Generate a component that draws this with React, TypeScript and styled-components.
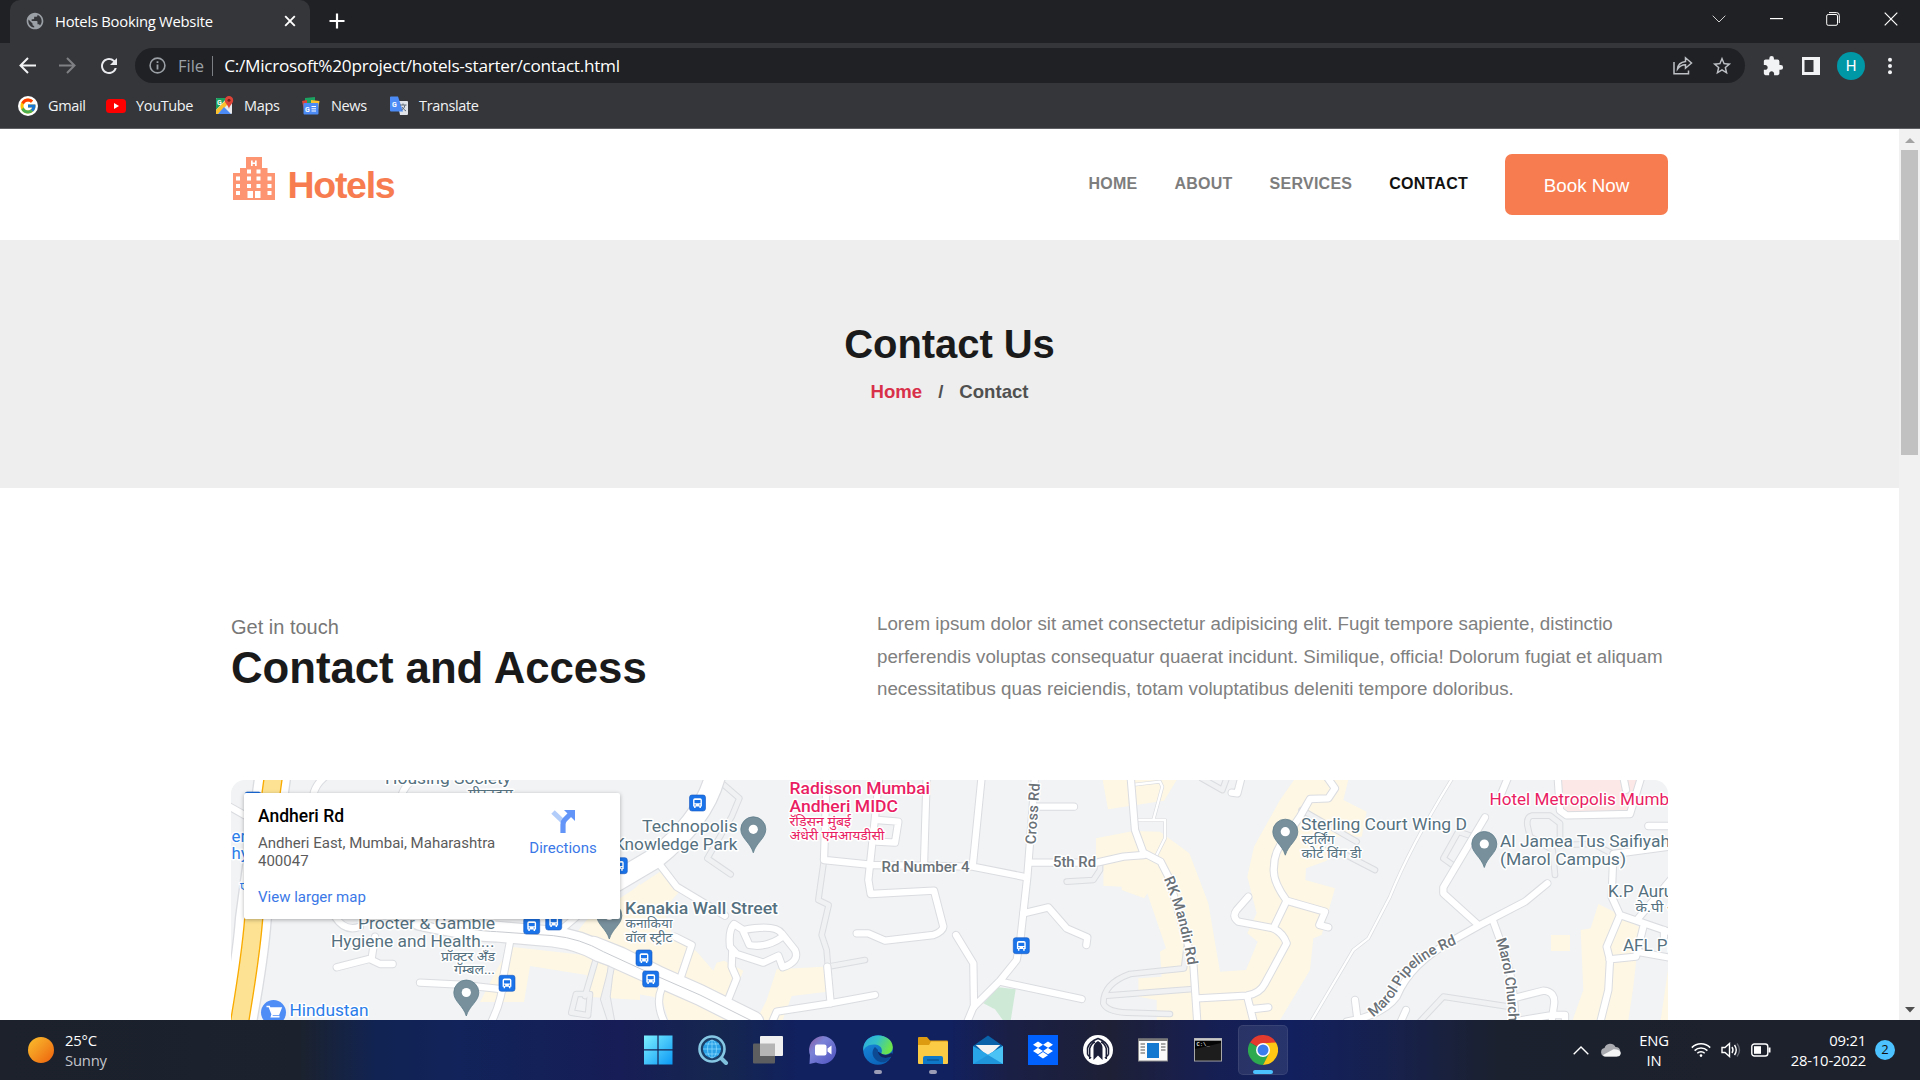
import React from 'react';
import styled, { createGlobalStyle } from 'styled-components';
import { FcGoogle } from 'react-icons/fc';
import { FaDropbox } from 'react-icons/fa';
import { MdExtension, MdStarBorder, MdRefresh, MdPublic } from 'react-icons/md';

const UI = '"Open Sans", "Noto Sans", sans-serif';
const BODY = '"Liberation Sans", Arial, sans-serif';
const MAP = 'Roboto, "Noto Sans", sans-serif';

const Global = createGlobalStyle`
  *, *::before, *::after { box-sizing: border-box; }
  html, body { margin: 0; padding: 0; overflow: hidden; background: #fff; }
  a { color: inherit; text-decoration: none; }
  svg { display: block; flex: none; }
`;

const Screen = styled.div`
  width: 1920px;
  height: 1080px;
  display: flex;
  flex-direction: column;
  overflow: hidden;
  font-family: ${UI};
`;

/* ---------- browser chrome ---------- */

const TabStrip = styled.div`
  height: 43px;
  flex: none;
  display: flex;
  padding-left: 10px;
  background: #202124;
`;

const Tab = styled.div`
  width: 300px;
  height: 43px;
  display: flex;
  align-items: center;
  padding: 0 13px 2px 15px;
  border-radius: 10px 10px 0 0;
  background: #35363a;
  color: #fff;
`;

const TabTitle = styled.span`
  flex: 1;
  margin-left: 10px;
  font-size: 14.8px;
  letter-spacing: -0.25px;
  white-space: nowrap;
`;

const NewTab = styled.div`
  padding: 13px 0 0 19px;
  flex: 1;
`;

const WindowButtons = styled.div`
  display: flex;
  align-items: center;
  padding: 0 22px 6px 0;
`;

const WinSlot = styled.div<{ $w: number }>`
  width: ${p => p.$w}px;
  display: flex;
  justify-content: flex-end;
`;

const Toolbar = styled.div`
  height: 45px;
  flex: none;
  display: flex;
  align-items: center;
  background: #35363a;
  padding: 0 0 0 19px;
  color: #e8eaed;
`;

const NavIcons = styled.div`
  width: 116px;
  display: flex;
  align-items: center;
  gap: 21px;
`;

const Omnibox = styled.div`
  width: 1610px;
  height: 35px;
  border-radius: 18px;
  background: #202124;
  display: flex;
  align-items: center;
  padding: 0 12px 0 14px;
`;

const Scheme = styled.span`
  margin-left: 12px;
  padding-right: 8px;
  border-right: 1.5px solid #7c8084;
  line-height: 20px;
  font-size: 16.5px;
  color: #9aa0a6;
`;

const Url = styled.span`
  flex: 1;
  margin-left: 11px;
  font-size: 17.2px;
  letter-spacing: -0.27px;
  color: #fff;
`;

const OmniActions = styled.div`
  display: flex;
  align-items: center;
  gap: 18px;
  color: #bdc1c6;
`;

const ToolActions = styled.div`
  display: flex;
  align-items: center;
  margin-left: 17px;
`;

const SidePanelIcon = styled.span`
  margin: 0 21px 0 18px;
`;

const Avatar = styled.div`
  width: 28px;
  height: 28px;
  margin: 0 22px 0 -4px;
  border-radius: 50%;
  background: #0097a7;
  color: #fff;
  font: 15px/28px Roboto, sans-serif;
  text-align: center;
`;

const Bookmarks = styled.div`
  height: 41px;
  flex: none;
  display: flex;
  align-items: center;
  padding: 0 0 5px 18px;
  background: #35363a;
  border-bottom: 1px solid #5f6063;
`;

const Bookmark = styled.a<{ $w: number }>`
  width: ${p => p.$w}px;
  display: flex;
  align-items: center;
  gap: 10px;
  font-size: 14.5px;
  letter-spacing: -0.35px;
  color: #f1f3f4;
`;

const GoogleBadge = styled.span`
  width: 20px;
  height: 20px;
  border-radius: 50%;
  background: #fff;
  display: grid;
  place-items: center;
`;

/* ---------- page ---------- */

const Viewport = styled.div`
  height: 891px;
  flex: none;
  display: flex;
`;

const Page = styled.div`
  width: 1899px;
  overflow: hidden;
  background: #fff;
  font-family: ${BODY};
`;

const ScrollTrack = styled.div`
  width: 21px;
  background: #f1f1f1;
  display: flex;
  flex-direction: column;
  align-items: center;
  justify-content: space-between;
  padding: 9px 0 7px;
`;

const ScrollThumb = styled.div`
  width: 17px;
  height: 305px;
  margin: 6px 0 auto;
  background: #c1c1c1;
`;

const Header = styled.header`
  height: 111px;
  display: flex;
  align-items: center;
  padding: 0 231px;
`;

const Brand = styled.a`
  display: flex;
  align-items: center;
  flex: 1;
  color: #f77d50;
  & > svg { margin-bottom: 13px; }
`;

const BrandName = styled.span`
  margin: 1px 0 0 12.5px;
  font-size: 37.5px;
  font-weight: 700;
  letter-spacing: -1.3px;
`;

const Menu = styled.nav`
  display: flex;
  gap: 37px;
  margin: 0 37px 2px 0;
`;

const MenuLink = styled.a<{ $active?: boolean }>`
  font-size: 16px;
  font-weight: 700;
  letter-spacing: 0.25px;
  color: ${p => (p.$active ? '#111' : '#7d7d7d')};
`;

const BookButton = styled.button`
  width: 163px;
  height: 61px;
  border: 0;
  border-radius: 7px;
  background: #f77d50;
  color: #fff;
  font: 18.75px ${BODY};
  padding: 2px 0 0;
`;

const Hero = styled.section`
  height: 248px;
  display: flex;
  flex-direction: column;
  align-items: center;
  background: #eee;
  padding-top: 80px;
`;

const HeroTitle = styled.h1`
  margin: 0;
  font-size: 40px;
  line-height: 48px;
  letter-spacing: -0.05px;
  color: #1a1a1a;
`;

const Crumbs = styled.div`
  display: flex;
  gap: 16px;
  margin-top: 13px;
  font-size: 18.6px;
  line-height: 22px;
  font-weight: 700;
`;

const Crumb = styled.span<{ $link?: boolean }>`
  color: ${p => (p.$link ? '#d9304a' : '#505050')};
`;

const Intro = styled.section`
  height: 292px;
  display: flex;
  padding: 0 231px;
`;

const IntroHead = styled.div`
  width: 646px;
  padding-top: 126px;
`;

const Kicker = styled.div`
  font-size: 20px;
  line-height: 26px;
  color: #777;
`;

const IntroTitle = styled.h2`
  margin: 2px 0 0;
  font-size: 43.75px;
  line-height: 52px;
  letter-spacing: -0.05px;
  color: #1a1a1a;
`;

const IntroText = styled.p`
  margin: 120px 0 0;
  font-size: 18.75px;
  line-height: 32.6px;
  color: #808080;
  white-space: nowrap;
`;

const MapFrame = styled.div`
  position: relative;
  width: 1437px;
  height: 240px;
  margin-left: 231px;
  border-radius: 14px 14px 0 0;
  overflow: hidden;
`;

const PlaceCard = styled.div`
  position: absolute;
  left: 13px;
  top: 13px;
  width: 376px;
  height: 126px;
  display: flex;
  padding: 13px 23px 0 14px;
  border-radius: 2px;
  background: #fff;
  box-shadow: 0 1px 4px rgba(0, 0, 0, 0.3);
  font-family: ${MAP};
`;

const PlaceInfo = styled.div`
  flex: 1;
`;

const PlaceName = styled.div`
  font-size: 17.5px;
  font-weight: 500;
  line-height: 20px;
  color: #000;
`;

const PlaceAddress = styled.div`
  width: 250px;
  margin-top: 8px;
  font-size: 15px;
  line-height: 18px;
  color: #5b5b5b;
`;

const MapLink = styled.a`
  display: block;
  font-size: 15px;
  line-height: 18px;
  margin-top: 18px;
  color: #3b78e7;
`;

const Directions = styled.div`
  width: 68px;
  display: flex;
  flex-direction: column;
  align-items: center;
  padding-top: 3px;
  font-size: 15px;
  line-height: 18px;
  color: #3b78e7;
  & > span { margin-top: 6px; }
`;

/* ---------- taskbar ---------- */

const Taskbar = styled.div`
  height: 60px;
  flex: none;
  display: flex;
  align-items: center;
  color: #fff;
  background: linear-gradient(90deg, #1c212b 0, #1b222e 300px, #112352 375px, #11235a 460px, #171d56 620px, #15274f 720px, #11205f 800px, #11205f 950px, #1a1f45 1010px, #1e2036 1110px, #171f50 1200px, #12205f 1290px, #17214a 1400px, #1b212e 1500px, #1d212b 1920px);
`;

const Weather = styled.div`
  width: 632.5px;
  display: flex;
  align-items: center;
  padding-left: 28px;
  gap: 11px;
`;

const Sun = styled.span`
  width: 26px;
  height: 26px;
  border-radius: 50%;
  background: linear-gradient(135deg, #fbc02d, #f3921f 50%, #ef5f0b);
`;

const Lines = styled.div<{ $align?: string; $w?: number }>`
  width: ${p => (p.$w ? `${p.$w}px` : 'auto')};
  display: flex;
  flex-direction: column;
  font-size: 14.8px;
  line-height: 20px;
  letter-spacing: -0.2px;
  text-align: ${p => p.$align ?? 'left'};
  white-space: nowrap;
`;

const Dim = styled.span`
  color: #c3c6cc;
`;

const Apps = styled.div`
  display: flex;
  gap: 5px;
`;

const TaskSlot = styled.div<{ $active?: boolean }>`
  width: 50px;
  height: 50px;
  display: flex;
  flex-direction: column;
  align-items: center;
  padding-top: 10px;
  border-radius: 5px;
  background: ${p => (p.$active ? 'rgba(255,255,255,0.09)' : 'transparent')};
  box-shadow: ${p => (p.$active ? 'inset 0 0 0 1px rgba(255,255,255,0.08)' : 'none')};
`;

const Running = styled.span<{ $active?: boolean }>`
  width: ${p => (p.$active ? 20 : 8)}px;
  height: 4px;
  margin-top: 5px;
  border-radius: 2px;
  background: ${p => (p.$active ? '#4cc2ff' : '#9a9db5')};
`;

const Tray = styled.div`
  margin-left: auto;
  padding-right: 25px;
  display: flex;
  align-items: center;
`;

const TrayIcon = styled.span<{ $ml?: number }>`
  margin-left: ${p => p.$ml ?? 0}px;
`;

const Badge = styled.span`
  width: 20px;
  height: 20px;
  margin-left: 9px;
  border-radius: 50%;
  background: #4cc2ff;
  color: #111;
  font-size: 13px;
  line-height: 19px;
  text-align: center;
`;

/* ---------- map data: every sheet uses 3 units per pixel ---------- */

type Kind = 'road' | 'wide' | 'minor' | 'thin';
type Sheet = { x: number; land: [string, string][]; roads: [Kind, string][] };

const CREAM = '#fef7e4';

const sheets: Sheet[] = [
  {
    x: 220,
    land: [
      [CREAM, 'M870 530L1140 560L1260 600V690L1100 680L1100 615L930 588L912 696H780L830 600Z'],
      [CREAM, 'M1100 450L1200 400L1260 340V560L1150 545L1060 500Z'],
    ],
    roads: [
      ['road', 'M20 105L100 150'],
      ['road', 'M280 75Q285 45 315 20'],
      ['road', 'M545 75Q555 45 585 25'],
      ['road', 'M345 440Q375 487 420 470'],
      ['road', 'M465 500L455 565L350 592M455 570L480 582H518'],
      ['road', 'M600 638L720 644L850 658'],
      ['road', 'M870 515L850 620Q848 690 812 760'],
      ['minor', 'M1130 560L1095 678M1068 672H1110L1104 736L1054 728ZM1178 580L1150 688L1172 755'],
      ['wide', 'M600 450Q760 485 830 485L1000 500Q1080 510 1140 545L1180 560L1280 605'],
      ['road', 'M1010 490L1070 440'],
    ],
  },
  {
    x: 600,
    land: [
      [CREAM, 'M60 385L180 305L240 362L190 420L215 490L290 545L340 602L350 578L372 572L430 602L395 690L440 710L520 750H205L190 700L160 680L90 668L95 685L0 680V480Z'],
      [CREAM, 'M530 598L670 590L682 665L575 678L548 750H470L500 690Z'],
      ['#ceead6', 'M1150 700L1195 652L1247 658L1232 752H1210L1185 718Z'],
    ],
    roads: [
      ['minor', 'M355 30L418 85L395 140L322 265L392 313'],
      ['minor', 'M672 270L655 390L686 405L665 495L680 540L684 590L795 570'],
      ['minor', 'M34 580L22 680L36 755'],
      ['road', 'M225 500L275 525L243 620'],
      ['road', 'M165 265L230 350L375 437'],
      ['road', 'M402 462Q385 480 390 530L410 552L490 578L535 557L548 592Q600 575 585 540L545 490Q525 462 430 480ZM430 485L448 525Q500 535 548 500'],
      ['road', 'M397 540L395 590L410 625L380 700'],
      ['road', 'M185 655Q165 700 195 760'],
      ['road', 'M680 20L672 270L818 285L1118 290L1280 322M980 20L972 285M1145 20L1118 290'],
      ['road', 'M838 20L805 330L812 372L1002 362L1030 470Q1028 485 1000 495L855 512L805 490H770'],
      ['road', 'M833 150L895 155L885 218L830 215'],
      ['road', 'M682 590L692 700'],
      ['road', 'M515 760L530 725L690 700L825 675'],
      ['road', 'M1068 495L1120 580L1122 710'],
      ['wide', 'M345 20Q310 150 165 265L0 362'],
      ['wide', 'M-20 530L60 562L180 622L300 675L460 755'],
    ],
  },
  {
    x: 960,
    land: [
      [CREAM, 'M428 30H650L612 92L444 118Z'],
      [CREAM, 'M408 205L520 183L600 185L688 250L745 400L780 605L858 600L893 515L862 490L890 430L862 320L882 230L960 90L1002 30H1165L1150 90L1220 125L1205 200L1120 200L1100 272L1038 295L1036 330L1125 355L1085 495L1060 505L1050 600L975 725L960 750H590V690L535 680V625L605 620L600 545L618 535L562 370L553 385L485 360V350L430 347V280L408 260Z'],
    ],
    roads: [
      ['minor', 'M320 335L400 330L420 300V278'],
      ['minor', 'M680 530L672 595L510 612Q430 640 430 700Q440 725 500 728L630 732M440 677L700 657'],
      ['minor', 'M1025 120L1190 215M1100 225L1245 300'],
      ['minor', 'M725 25L787 60L800 25'],
      ['road', 'M845 20L832 70L815 68'],
      ['thin', 'M515 45L600 35L607 50L580 150M530 150H615V205L590 255'],
      ['road', 'M225 110H342'],
      ['road', 'M190 430L265 412L320 475L382 502L379 525'],
      ['road', 'M120 635L365 687'],
      ['road', 'M210 278H410L490 260L552 255'],
      ['road', 'M225 20L202 320L182 500L170 570L120 632L40 712L20 760'],
      ['road', 'M512 20L525 180L550 248L602 275L625 320L700 580L712 760'],
      ['road', 'M712 685L860 677Q900 670 915 640L980 520Q970 490 940 475L835 455Q815 440 830 420L865 380'],
      ['road', 'M940 475L980 392L1095 425L1078 465L1105 472M980 392Q935 330 942 290Q942 245 975 205L1020 140L1050 87L1105 85L1125 55L1100 20'],
      ['road', 'M862 680L882 760M880 717L925 712'],
    ],
  },
  {
    x: 1300,
    land: [
      ['#fce8e6', 'M785 30H1012L990 125H790Z'],
      [CREAM, 'M895 402L955 432L1032 480L1010 560L1000 650L985 750H818L850 660L842 480L872 475Z'],
      [CREAM, 'M753 495H810V543H753ZM1104 600V750H1082Z'],
    ],
    roads: [
      ['minor', 'M520 200L475 185L430 265L465 290'],
      ['minor', 'M780 225V160L750 137H695Q680 140 682 165L690 200L758 240L765 315M780 225L880 222L935 250'],
      ['minor', 'M355 760L430 680L640 712'],
      ['thin', 'M460 20Q330 230 270 380L205 505L160 540L30 760'],
      ['road', 'M625 20L600 80'],
      ['road', 'M555 142L430 352V370L535 465'],
      ['road', 'M742 340L675 395L540 465L460 510Q330 580 290 680Q250 735 140 755M165 690L172 745'],
      ['road', 'M580 455L600 510Q645 620 645 760'],
      ['road', 'M640 685L730 662Q768 665 762 705L756 745M640 755L756 735L795 735V760M318 720L300 760'],
      ['road', 'M773 20L780 122L800 136L990 132L1024 20M970 20L978 60'],
      ['road', 'M1045 168H1120'],
      ['road', 'M1120 228L940 252L935 380L960 435L1120 490M960 435L920 530L930 570L925 660L900 760M928 568L1008 560L1030 470M1015 445L1120 320M1010 545L1120 565M1092 480V500'],
    ],
  },
];

const casingW: Record<Kind, number> = { road: 25, wide: 66, minor: 20, thin: 11 };
const fillW: Record<Kind, number> = { road: 19, wide: 59, minor: 14, thin: 7 };

const Casing = styled.path`
  fill: none;
  stroke: #dadce0;
  stroke-linecap: round;
  stroke-linejoin: round;
`;

const Surface = styled(Casing)<{ $kind: Kind }>`
  stroke: ${p => (p.$kind === 'minor' ? '#eff1f2' : '#fff')};
`;

const MapText = styled.text<{ $c: string; $size: number; $bold?: boolean }>`
  font-family: ${MAP};
  font-size: ${p => p.$size}px;
  font-weight: ${p => (p.$bold ? 500 : 400)};
  fill: ${p => p.$c};
  stroke: #fff;
  stroke-width: 3px;
  stroke-linejoin: round;
  paint-order: stroke;
`;

const SLATE = '#557180';
const PINK = '#e91e63';
const BLUE = '#2b7de9';
const ROADTXT = '#6a7177';

type Lab = { t: string; x: number; y: number; w?: number; c?: string; s?: number; b?: boolean };
const labels: Lab[] = [
  { t: 'Housing Society', x: 385, y: 784, w: 126 },
  { t: 'गीरनदस', x: 468, y: 798, w: 45, s: 13 },
  { t: 'er', x: 231.5, y: 842, c: BLUE },
  { t: 'hy', x: 231.5, y: 859, c: BLUE },
  { t: 'ए', x: 240, y: 891, c: BLUE, s: 13 },
  { t: 'Procter & Gamble', x: 358, y: 929, w: 137 },
  { t: 'Hygiene and Health...', x: 331, y: 946.5, w: 163.5 },
  { t: 'प्रॉक्टर अँड', x: 441, y: 961, w: 54, s: 13 },
  { t: 'गॅम्बल...', x: 454, y: 974, w: 41, s: 13 },
  { t: 'Hindustan', x: 289.5, y: 1016, w: 79, c: BLUE },
  { t: 'Technopolis', x: 642, y: 832, w: 95.5 },
  { t: 'Knowledge Park', x: 614, y: 850, w: 123.500 },
  { t: 'Radisson Mumbai', x: 789.5, y: 794, w: 140.5, c: PINK, b: true },
  { t: 'Andheri MIDC', x: 789.5, y: 811.5, w: 108.5, c: PINK, b: true },
  { t: 'रॅडिसन मुंबई', x: 789.5, y: 826, w: 61.5, c: PINK, s: 13 },
  { t: 'अंधेरी एमआयडीसी', x: 789.5, y: 839.5, w: 95, c: PINK, s: 13 },
  { t: 'Kanakia Wall Street', x: 625, y: 914, w: 153, b: true },
  { t: 'कनाकिया', x: 625.5, y: 928, w: 47, s: 13 },
  { t: 'वॉल स्ट्रीट', x: 625.5, y: 942, w: 47, s: 13 },
  { t: 'Rd Number 4', x: 881.5, y: 872, w: 88, c: ROADTXT, s: 15, b: true },
  { t: '5th Rd', x: 1053, y: 867, w: 43, c: ROADTXT, s: 15, b: true },
  { t: 'Sterling Court Wing D', x: 1301, y: 829.5, w: 166 },
  { t: 'स्टर्लिंग', x: 1301.5, y: 843.5, w: 33, s: 13 },
  { t: 'कोर्ट विंग डी', x: 1301.5, y: 857.5, w: 60, s: 13 },
  { t: 'Hotel Metropolis Mumbai', x: 1489.5, y: 805, w: 193, c: PINK },
  { t: 'Al Jamea Tus Saifiyah', x: 1500, y: 847, w: 170 },
  { t: '(Marol Campus)', x: 1500, y: 864.5, w: 126 },
  { t: 'K.P Aurum', x: 1608, y: 897, w: 80 },
  { t: 'के.पी औरम', x: 1635.5, y: 911.5, w: 62, s: 13 },
  { t: 'AFL Pride', x: 1623, y: 950.5, w: 73 },
];

const pins: [number, number][] = [[466.3, 992.5], [609.3, 915.5], [753.3, 829.3], [1285.3, 831.7], [1484.3, 844]];
const stops: [number, number][] = [[253, 800], [531.7, 926], [553.7, 922], [619.3, 865.7], [507, 983.3], [697.5, 803], [644, 958], [650.7, 979], [1021.3, 945.7]];

const Pin = ({ x, y }: { x: number; y: number }) => (
  <g transform={`translate(${x} ${y})`}>
    <path d="M0 23.500C-3 13-12.500 9-12.500 0A12.500 12.500 0 0 1 12.500 0C12.500 9 3 13 0 23.500Z" fill="#78909c" stroke="#607d8b" strokeWidth="0.8" />
    <circle r="4.6" fill="#fff" />
  </g>
);

const BusStop = ({ x, y }: { x: number; y: number }) => (
  <g transform={`translate(${x - 8} ${y - 8})`}>
    <rect width="16" height="16" rx="2.4" fill="#1a73e8" stroke="#1558c0" strokeWidth="0.6" />
    <path d="M3.6 5Q3.6 3.2 5.4 3.2H10.6Q12.4 3.2 12.4 5V11.4H11.4V13H9.9V11.4H6.1V13H4.6V11.4H3.6Z" fill="#fff" />
    <path d="M5 5H11V8.2H5Z" fill="#1a73e8" />
    <circle cx="5.6" cy="9.9" r="0.7" fill="#1a73e8" />
    <circle cx="10.4" cy="9.9" r="0.7" fill="#1a73e8" />
  </g>
);

const StreetMap = () => (
  <svg width="1437" height="240" viewBox="231 780 1437 240">
    <rect x="231" y="780" width="1437" height="240" fill="#f1f3f4" />
    {sheets.map(s => (
      <g key={s.x} transform={`translate(${s.x} 770) scale(0.33333)`}>
        {s.land.map(([c, d]) => <path key={d} d={d} fill={c} />)}
      </g>
    ))}
    {(['minor', 'thin', 'road'] as Kind[]).map(layer => (
      <React.Fragment key={layer}>
        {sheets.map(s => (
          <g key={s.x} transform={`translate(${s.x} 770) scale(0.33333)`}>
            {s.roads.filter(([k]) => k === layer || (layer === 'road' && k === 'wide')).map(([k, d]) => <Casing key={d} d={d} strokeWidth={casingW[k]} />)}
          </g>
        ))}
        {sheets.map(s => (
          <g key={s.x} transform={`translate(${s.x} 770) scale(0.33333)`}>
            {s.roads.filter(([k]) => k === layer || (layer === 'road' && k === 'wide')).map(([k, d]) => <Surface key={d} $kind={k} d={d} strokeWidth={fillW[k]} />)}
          </g>
        ))}
      </React.Fragment>
    ))}
    <g transform="translate(220 770) scale(0.33333)" fill="none">
      <path d="M158 20L100 447Q92 560 55 760" stroke="#dadce0" strokeWidth="112" />
      <path d="M158 20L100 447Q92 560 55 760" stroke="#fff" strokeWidth="104" />
      <path d="M160 20L101 447Q92 560 58 760" stroke="#f9ab00" strokeWidth="58" />
      <path d="M160 20L101 447Q92 560 58 760" stroke="#fde293" strokeWidth="50" />
      <path d="M600 452Q760 483 830 485L1000 497Q1080 505 1150 545L1200 568L1280 605L1440 675L1600 755" stroke="#c8cbd0" strokeWidth="3" />
    </g>
    {labels.map(l => (
      <MapText key={l.t} x={l.x} y={l.y} textLength={l.w} lengthAdjust="spacingAndGlyphs" $c={l.c ?? SLATE} $size={l.s ?? 16.8} $bold={l.b}>{l.t}</MapText>
    ))}
    <defs>
      <path id="cross" d="M1035.5 844.500L1040.5 775" />
      <path id="mandir" d="M1163.5 878.5Q1176 908 1181 932Q1186 953 1188 967" />
      <path id="pipeline" d="M1373 1017.500Q1391 1004 1401 985Q1414 960 1462 942" />
      <path id="church" d="M1495.5 940Q1508 970 1509.5 1045" />
    </defs>
    {[['cross', 'Cross Rd', 61], ['mandir', 'RK Mandir Rd', 90], ['pipeline', 'Marol Pipeline Rd', 114], ['church', 'Marol Church Rd', 103]].map(([id, t, w]) => (
      <MapText key={id} $c={ROADTXT} $size={14.6} $bold>
        <textPath href={`#${id}`} textLength={w as number}>{t}</textPath>
      </MapText>
    ))}
    {stops.map(([x, y]) => <BusStop key={x} x={x} y={y} />)}
    {pins.map(([x, y]) => <Pin key={x} x={x} y={y} />)}
    <circle cx="273.5" cy="1012.5" r="12.5" fill="#4f8df6" />
    <path d="M266.5 1006.5H269.2L272.2 1014.2H278.6L281 1008H270.2M272.2 1014.2L271.5 1016.6H279.5" fill="none" stroke="#fff" strokeWidth="1.6" />
    <path d="M270.2 1008H281L278.6 1014.2H272.4Z" fill="#fff" />
  </svg>
);

/* ---------- drawings ---------- */

const HotelLogo = () => (
  <svg width="44" height="43" viewBox="0 0 44 43">
    <path d="M2 16H9V11H15V0H31V11H36.500V16H44V43H2Z" fill="#fd9573" />
    <g fill="#fff">
      <path d="M20 3.500H21.700V5.500H24V3.500H25.700V9H24V7H21.700V9H20Z" />
      {[[16, 12.5], [25.500, 12.5]].map(([x, y]) => <rect key={x} x={x} y={y} width="4" height="4" />)}
      {[19.500, 27].map(y => [5, 16, 25.500, 36.500].map(x => <rect key={`${x}-${y}`} x={x} y={y} width="4" height="4" />))}
      <rect x="5" y="34" width="4" height="4" />
      <rect x="36.500" y="34" width="4" height="4" />
      <rect x="16.500" y="34" width="5.500" height="7" />
      <rect x="24" y="34" width="5.500" height="7" />
    </g>
  </svg>
);

const line = { fill: 'none', stroke: 'currentColor' };

const StartIcon = () => (
  <svg width="30" height="30" viewBox="0 0 30 30">
    <defs><linearGradient id="st" x1="0" y1="0" x2="1" y2="1"><stop stopColor="#7df0ff" /><stop offset="1" stopColor="#0b98f5" /></linearGradient></defs>
    <path d="M1 .5H14.400V14.200H1ZM15.600 .5H29.500V14.200H15.600ZM1 15.600H14.400V29.500H1ZM15.600 15.600H29.500V29.500H15.600Z" fill="url(#st)" />
  </svg>
);
const SearchIcon = () => (
  <svg width="32" height="30" viewBox="0 0 32 30" fill="none">
    <path d="M23 22L29 28" stroke="#7fc0dc" strokeWidth="4" strokeLinecap="round" />
    <circle cx="15" cy="14" r="12.500" fill="#1b3f68" stroke="#86c8e4" strokeWidth="2.600" />
    <circle cx="15" cy="14" r="9" fill="#2aa1e6" />
    <path d="M6 14H24M15 5V23M8 9H22M8 19H22" stroke="#8fdcff" strokeWidth=".7" />
    <ellipse cx="15" cy="14" rx="4.500" ry="9" stroke="#8fdcff" strokeWidth=".7" />
  </svg>
);
const TaskViewIcon = () => (
  <svg width="30" height="30" viewBox="0 0 30 30">
    <rect x="0" y="8.500" width="22" height="20" rx="1" fill="#5d5e60" />
    <rect x="7" y="1" width="23" height="20" rx="1" fill="#f0f0f0" />
    <rect x="7" y="8.500" width="15" height="12.500" fill="#b5b5b5" />
  </svg>
);
const ChatIcon = () => (
  <svg width="30" height="30" viewBox="0 0 30 30">
    <defs><linearGradient id="ch" x1="0" y1="0" x2="1" y2="1"><stop stopColor="#8c5a9c" /><stop offset=".35" stopColor="#7b83d8" /><stop offset="1" stopColor="#4b50bd" /></linearGradient></defs>
    <path d="M15 1A14 14 0 1 1 8 27.500L1.500 29L2 20A14 14 0 0 1 15 1Z" fill="url(#ch)" />
    <rect x="7" y="9.500" width="11.500" height="11" rx="2" fill="#fff" />
    <path d="M19.500 13.500L23.500 10.500V19.500L19.500 16.500Z" fill="#fff" />
  </svg>
);
const EdgeIcon = () => (
  <svg width="30" height="30" viewBox="0 0 30 30">
    <defs>
      <linearGradient id="e1" x1="0" y1="0" x2="1" y2=".35"><stop stopColor="#2aa6e0" /><stop offset=".5" stopColor="#34c1c8" /><stop offset="1" stopColor="#6be34c" /></linearGradient>
      <linearGradient id="e2" x1="0" y1="0" x2=".6" y2="1"><stop stopColor="#1b8fe0" /><stop offset="1" stopColor="#0a63b8" /></linearGradient>
    </defs>
    <circle cx="15" cy="15" r="14.800" fill="url(#e2)" />
    <path d="M.3 13C2-4 29-3 29.800 12C30 19 22 21 18 18.500C20 16 19 10 12 9.500C6 9 1.500 12 .3 16Z" fill="url(#e1)" />
    <path d="M12 12C6 18 12 29 22 27C26 25.500 28 22 27.500 21.500C22 25 14 21 15 15Z" fill="#0d4a94" />
    <path d="M18.300 18.600C21 20.800 26 20 28.600 17.500L30 24L27.300 21.800C22 24.500 15.500 22 14.800 16.500Z" fill="#14225e" />
  </svg>
);
const FolderIcon = () => (
  <svg width="30" height="30" viewBox="0 0 30 30">
    <path d="M0 3Q0 2 1 2H9L12 5.500H29Q30 5.500 30 6.500V10H0Z" fill="#dd9b12" />
    <path d="M0 10H11L13 6.500H29Q30 6.500 30 8V28Q30 29 29 29H1Q0 29 0 28Z" fill="#fccb45" />
    <path d="M5 29V23Q5 21 7 21H23Q25 21 25 23V29Z" fill="#0f78c8" />
    <path d="M9 25H21" stroke="#0a4f8d" strokeWidth="1.200" />
  </svg>
);
const MailIcon = () => (
  <svg width="30" height="30" viewBox="0 0 30 30">
    <path d="M0 11L15 .5L30 11L22 18H8Z" fill="#0a62a9" />
    <path d="M3 10H27L15 22Z" fill="#f3f3f3" />
    <path d="M0 11L15 19.500L30 11V29H0Z" fill="#27a5e6" />
    <path d="M3 10H27L15 19.500Z" fill="#f3f3f3" />
    <path d="M30 11L15 20L30 29Z" fill="#4cc3f5" />
    <path d="M15 20L30 29H0Z" fill="#1b8bd6" opacity=".6" />
  </svg>
);
const DropboxTile = styled.span`
  width: 30px;
  height: 30px;
  display: grid;
  place-items: center;
  background: #0061fe;
  color: #fff;
  font-size: 20px;
`;
const RoundAppIcon = () => (
  <svg width="30" height="30" viewBox="0 0 30 30">
    <circle cx="15" cy="15" r="15" fill="#fff" />
    <path d="M10.500 25V12Q11 8 15 6Q19 8 19.500 12V25L15 20.500Z" fill="#1b1f38" />
    <path d="M4.500 19.500V13Q6.500 6.500 15 3.500Q23.500 6.500 25.500 13V19.500M6.700 24V13.500Q8.500 8 12 7M23.300 24V13.500Q21.500 8 18 7M4.500 19.500L8 23M25.500 19.500L22 23" fill="none" stroke="#1b1f38" strokeWidth="1.500" />
  </svg>
);
const DocIcon = () => (
  <svg width="30" height="30" viewBox="0 0 30 30">
    <rect x=".5" y="4" width="29" height="22" fill="#fafafa" stroke="#8f8f8f" />
    <rect x=".5" y="3.500" width="29" height="2.500" fill="#777" />
    <rect x="9" y="8" width="12" height="15" fill="#1278d0" />
    <path d="M2.500 9H7M2.500 12H7M2.500 15H7M2.500 18H7M23 9H27.500M23 12H27.500M23 15H27.500" stroke="#555" />
  </svg>
);
const CmdText = styled.text`
  font: 700 5.500px "Liberation Mono", monospace;
  fill: #ddd;
`;
const TerminalIcon = () => (
  <svg width="30" height="30" viewBox="0 0 30 30">
    <rect x="1.500" y="3.500" width="27" height="22.500" fill="#050505" stroke="#a8a8a8" />
    <path d="M2 14L28 8V25H2Z" fill="#1d1d1d" />
    <rect x="1.500" y="3.500" width="27" height="2.200" fill="#c9c9c9" />
    <CmdText x="3.500" y="11">C:\_</CmdText>
  </svg>
);
const ChromeIcon = () => (
  <svg width="30" height="30" viewBox="0 0 30 30">
    <path d="M15 15L2 7.500A15 15 0 0 1 28 7.500Z" fill="#e33b2e" />
    <path d="M15 15L2 7.500A15 15 0 0 0 15 30L21.500 18.800Z" fill="#2da94f" />
    <path d="M15 8.200L28 7.500A15 15 0 0 1 15 30L21 18.500Z" fill="#fdc713" />
    <circle cx="15" cy="15" r="7" fill="#fff" />
    <circle cx="15" cy="15" r="5.500" fill="#3b7ded" />
  </svg>
);

const taskApps: { icon: React.ReactNode; run?: boolean; active?: boolean }[] = [
  { icon: <StartIcon /> }, { icon: <SearchIcon /> }, { icon: <TaskViewIcon /> }, { icon: <ChatIcon /> },
  { icon: <EdgeIcon />, run: true }, { icon: <FolderIcon />, run: true }, { icon: <MailIcon /> },
  { icon: <DropboxTile><FaDropbox /></DropboxTile> }, { icon: <RoundAppIcon /> }, { icon: <DocIcon /> },
  { icon: <TerminalIcon /> }, { icon: <ChromeIcon />, run: true, active: true },
];

const IconLetter = styled.text`
  font: 700 7px Roboto, sans-serif;
  fill: #fff;
`;

export default function App() {
  return (
    <Screen>
      <Global />
      <TabStrip>
        <Tab>
          <MdPublic size={20} color="#9aa0a6" />
          <TabTitle>Hotels Booking Website</TabTitle>
          <svg width="14" height="14" viewBox="0 0 14 14" {...line} strokeWidth="1.9"><path d="M2.200 2.200L11.800 11.800M11.800 2.200L2.200 11.800" /></svg>
        </Tab>
        <NewTab>
          <svg width="16" height="16" viewBox="0 0 16 16"><path d="M8 .5V15.500M.5 8H15.500" stroke="#fff" strokeWidth="2.200" /></svg>
        </NewTab>
        <WindowButtons>
          <WinSlot $w={14}><svg width="14" height="8" viewBox="0 0 14 8"><path d="M.7 .7L7 7L13.300 .7" fill="none" stroke="#d0d0d0" /></svg></WinSlot>
          <WinSlot $w={57}><svg width="13" height="2"><rect width="13" height="1.200" fill="#fff" /></svg></WinSlot>
          <WinSlot $w={57}><svg width="14" height="14" viewBox="0 0 14 14" fill="none" stroke="#fff"><rect x=".7" y="2.500" width="10.800" height="10.800" rx="1.500" /><path d="M3 .6H10.500Q13.300 .6 13.300 3.400V11" /></svg></WinSlot>
          <WinSlot $w={58}><svg width="14" height="14" viewBox="0 0 14 14"><path d="M.7 .7L13.300 13.300M13.300 .7L.7 13.300" stroke="#fff" strokeWidth="1.200" /></svg></WinSlot>
        </WindowButtons>
      </TabStrip>
      <Toolbar>
        <NavIcons>
          <svg width="18" height="17" viewBox="0 0 18 17" fill="none" stroke="#f1f3f4" strokeWidth="2"><path d="M17 8.500H2M9 1L1.500 8.500L9 16" /></svg>
          <svg width="18" height="17" viewBox="0 0 18 17" fill="none" stroke="#7e8083" strokeWidth="2"><path d="M1 8.500H16M9 1L16.500 8.500L9 16" /></svg>
          <MdRefresh size={24} />
        </NavIcons>
        <Omnibox>
          <svg width="17" height="17" viewBox="0 0 17 17" fill="none" stroke="#9aa0a6" strokeWidth="1.600"><circle cx="8.500" cy="8.500" r="7.400" /><path d="M8.500 7.500V12.500M8.500 4.300V6" strokeWidth="1.800" /></svg>
          <Scheme>File</Scheme>
          <Url>C:/Microsoft%20project/hotels-starter/contact.html</Url>
          <OmniActions>
            <svg width="20" height="19" viewBox="0 0 20 19" {...line} strokeWidth="1.500"><path d="M1 6V17.700H15.500V14.500M4.500 13Q5 6.500 12.500 5.500V1.800L18.500 7L12.500 12.200V8.800Q7.500 8.800 4.500 13Z" /></svg>
            <MdStarBorder size={22} />
          </OmniActions>
        </Omnibox>
        <ToolActions>
          <MdExtension size={22} color="#f1f3f4" />
          <SidePanelIcon>
            <svg width="18" height="18" viewBox="0 0 18 18"><path d="M0 0H18V18H0ZM2.500 3V15H11.500V3Z" fill="#f1f3f4" fillRule="evenodd" /></svg>
          </SidePanelIcon>
          <Avatar>H</Avatar>
          <svg width="6" height="18" viewBox="0 0 6 18" fill="#f1f3f4"><circle cx="3" cy="2.700" r="2" /><circle cx="3" cy="9" r="2" /><circle cx="3" cy="15.300" r="2" /></svg>
        </ToolActions>
      </Toolbar>
      <Bookmarks>
        <Bookmark $w={88}><GoogleBadge><FcGoogle size={18} /></GoogleBadge>Gmail</Bookmark>
        <Bookmark $w={109}>
          <svg width="20" height="20" viewBox="0 0 20 20"><rect y="3" width="20" height="14" rx="3.500" fill="#f00" /><path d="M8 7V13L13 10Z" fill="#fff" /></svg>
          YouTube
        </Bookmark>
        <Bookmark $w={86}>
          <svg width="19" height="19" viewBox="0 0 19 19">
            <rect x="1" y="2" width="16" height="16" rx="1" fill="#e8eaed" />
            <path d="M1 3Q1 2 2 2H12L1 14Z" fill="#1ba261" />
            <path d="M1 14L11 4L13 8L3 18H1Z" fill="#fbc02d" />
            <path d="M9 11L16 18H3Z" fill="#4c8bf5" />
            <path d="M14 0A4.200 4.200 0 0 1 18.200 4.200C18.200 7.500 14.800 8.500 14 13C13.200 8.500 9.800 7.500 9.800 4.200A4.200 4.200 0 0 1 14 0Z" fill="#db4437" />
            <circle cx="14" cy="4.200" r="1.500" fill="#7b231b" />
            <IconLetter x="2" y="8.500">G</IconLetter>
          </svg>
          Maps
        </Bookmark>
        <Bookmark $w={88}>
          <svg width="20" height="19" viewBox="0 0 20 19">
            <path d="M4 2L14 1V8H4Z" fill="#1ba261" /><path d="M1 5L6 4V14H3Z" fill="#db4437" /><path d="M10 4L18.500 5L17 14H10Z" fill="#fbc02d" />
            <rect x="2.500" y="7" width="15" height="11.500" rx="1" fill="#4c8bf5" />
            <IconLetter x="4" y="15.500">G</IconLetter><path d="M10.500 10.500H15M10.500 12.800H15M10.500 15H15" stroke="#fff" />
          </svg>
          News
        </Bookmark>
        <Bookmark $w={100}>
          <svg width="20" height="20" viewBox="0 0 20 20">
            <path d="M8 5H18Q19 5 19 6V18Q19 19 18 19H11Z" fill="#e0e3e7" />
            <path d="M1 1Q1 .5 2 .5H9L14 15.500H2Q1 15.500 1 14.500Z" fill="#4c8bf5" />
            <path d="M11 9H17.500M14 7.500V9M16 9Q15.500 13 12.500 14M13 11Q14 13 17 15" fill="none" stroke="#5f6b7a" />
            <IconLetter x="3" y="10.500">G</IconLetter>
          </svg>
          Translate
        </Bookmark>
      </Bookmarks>

      <Viewport>
        <Page>
          <Header>
            <Brand><HotelLogo /><BrandName>Hotels</BrandName></Brand>
            <Menu>
              <MenuLink>HOME</MenuLink>
              <MenuLink>ABOUT</MenuLink>
              <MenuLink>SERVICES</MenuLink>
              <MenuLink $active>CONTACT</MenuLink>
            </Menu>
            <BookButton>Book Now</BookButton>
          </Header>
          <Hero>
            <HeroTitle>Contact Us</HeroTitle>
            <Crumbs><Crumb $link>Home</Crumb><Crumb>/</Crumb><Crumb>Contact</Crumb></Crumbs>
          </Hero>
          <Intro>
            <IntroHead>
              <Kicker>Get in touch</Kicker>
              <IntroTitle>Contact and Access</IntroTitle>
            </IntroHead>
            <IntroText>
              Lorem ipsum dolor sit amet consectetur adipisicing elit. Fugit tempore sapiente, distinctio<br />
              perferendis voluptas consequatur quaerat incidunt. Similique, officia! Dolorum fugiat et aliquam<br />
              necessitatibus quas reiciendis, totam voluptatibus deleniti tempore doloribus.
            </IntroText>
          </Intro>
          <MapFrame>
            <StreetMap />
            <PlaceCard>
              <PlaceInfo>
                <PlaceName>Andheri Rd</PlaceName>
                <PlaceAddress>Andheri East, Mumbai, Maharashtra 400047</PlaceAddress>
                <MapLink>View larger map</MapLink>
              </PlaceInfo>
              <Directions>
                <svg width="24" height="24" viewBox="0 0 24 24" fill="none">
                  <path d="M2 3L12 12.500" stroke="#b3cdfb" strokeWidth="5" />
                  <path d="M12 24V15.500Q12 12.500 14 10.500L19 5.500" stroke="#6295f7" strokeWidth="5.200" />
                  <path d="M13 1H24V12Z" fill="#6295f7" />
                </svg>
                <span>Directions</span>
              </Directions>
            </PlaceCard>
          </MapFrame>
        </Page>
        <ScrollTrack>
          <svg width="10" height="6"><path d="M5 0L10 5H0Z" fill="#a3a3a3" /></svg>
          <ScrollThumb />
          <svg width="10" height="6"><path d="M0 0H10L5 5.500Z" fill="#505050" /></svg>
        </ScrollTrack>
      </Viewport>

      <Taskbar>
        <Weather>
          <Sun />
          <Lines><span>25°C</span><Dim>Sunny</Dim></Lines>
        </Weather>
        <Apps>
          {taskApps.map((a, i) => (
            <TaskSlot key={i} $active={a.active}>{a.icon}{a.run && <Running $active={a.active} />}</TaskSlot>
          ))}
        </Apps>
        <Tray>
          <svg width="16" height="9" viewBox="0 0 16 9"><path d="M.7 8.300L8 1L15.300 8.300" fill="none" stroke="#fff" strokeWidth="1.400" /></svg>
          <TrayIcon $ml={12}>
            <svg width="20" height="14" viewBox="0 0 20 14"><path d="M4.500 13.500A4.300 4.300 0 0 1 3.500 5A6 6 0 0 1 14.500 4A4.800 4.800 0 0 1 15.500 13.500Z" fill="#a9abb0" /><path d="M2 12L12.500 6.200Q19 6 19.800 10Q19.500 13.500 16 13.500H4.500Q2.500 13.500 2 12Z" fill="#f5f5f5" /></svg>
          </TrayIcon>
          <TrayIcon $ml={18}><Lines $align="center" $w={30}><span>ENG</span><span>IN</span></Lines></TrayIcon>
          <TrayIcon $ml={22}>
            <svg width="20" height="16" viewBox="0 0 20 16" fill="none" stroke="#fff" strokeWidth="1.500"><path d="M.8 5.600A13 13 0 0 1 19.200 5.600M3.600 8.600A9 9 0 0 1 16.400 8.600M6.300 11.300A5.300 5.300 0 0 1 13.700 11.300" /><circle cx="10" cy="13.600" r="1.300" fill="#fff" stroke="none" /></svg>
          </TrayIcon>
          <TrayIcon $ml={10}>
            <svg width="20" height="16" viewBox="0 0 20 16" fill="none" stroke="#fff" strokeWidth="1.400"><path d="M1 5.500H4L8.500 1.500V14.500L4 10.500H1Z" /><path d="M11 5Q13 8 11 11M13.500 3Q17 8 13.500 13" /><path d="M16 1.500Q21 8 16 14.500" stroke="#62666f" /></svg>
          </TrayIcon>
          <TrayIcon $ml={10}>
            <svg width="20" height="14" viewBox="0 0 20 14"><rect x=".8" y="1" width="16" height="12" rx="2.500" fill="none" stroke="#fff" strokeWidth="1.400" /><rect x="3" y="3.200" width="7" height="7.600" fill="#fff" /><path d="M18.500 4.500V9.500" stroke="#fff" strokeWidth="2" /></svg>
          </TrayIcon>
          <TrayIcon $ml={19}><Lines $align="right" $w={76}><span>09:21</span><span>28-10-2022</span></Lines></TrayIcon>
          <Badge>2</Badge>
        </Tray>
      </Taskbar>
    </Screen>
  );
}
